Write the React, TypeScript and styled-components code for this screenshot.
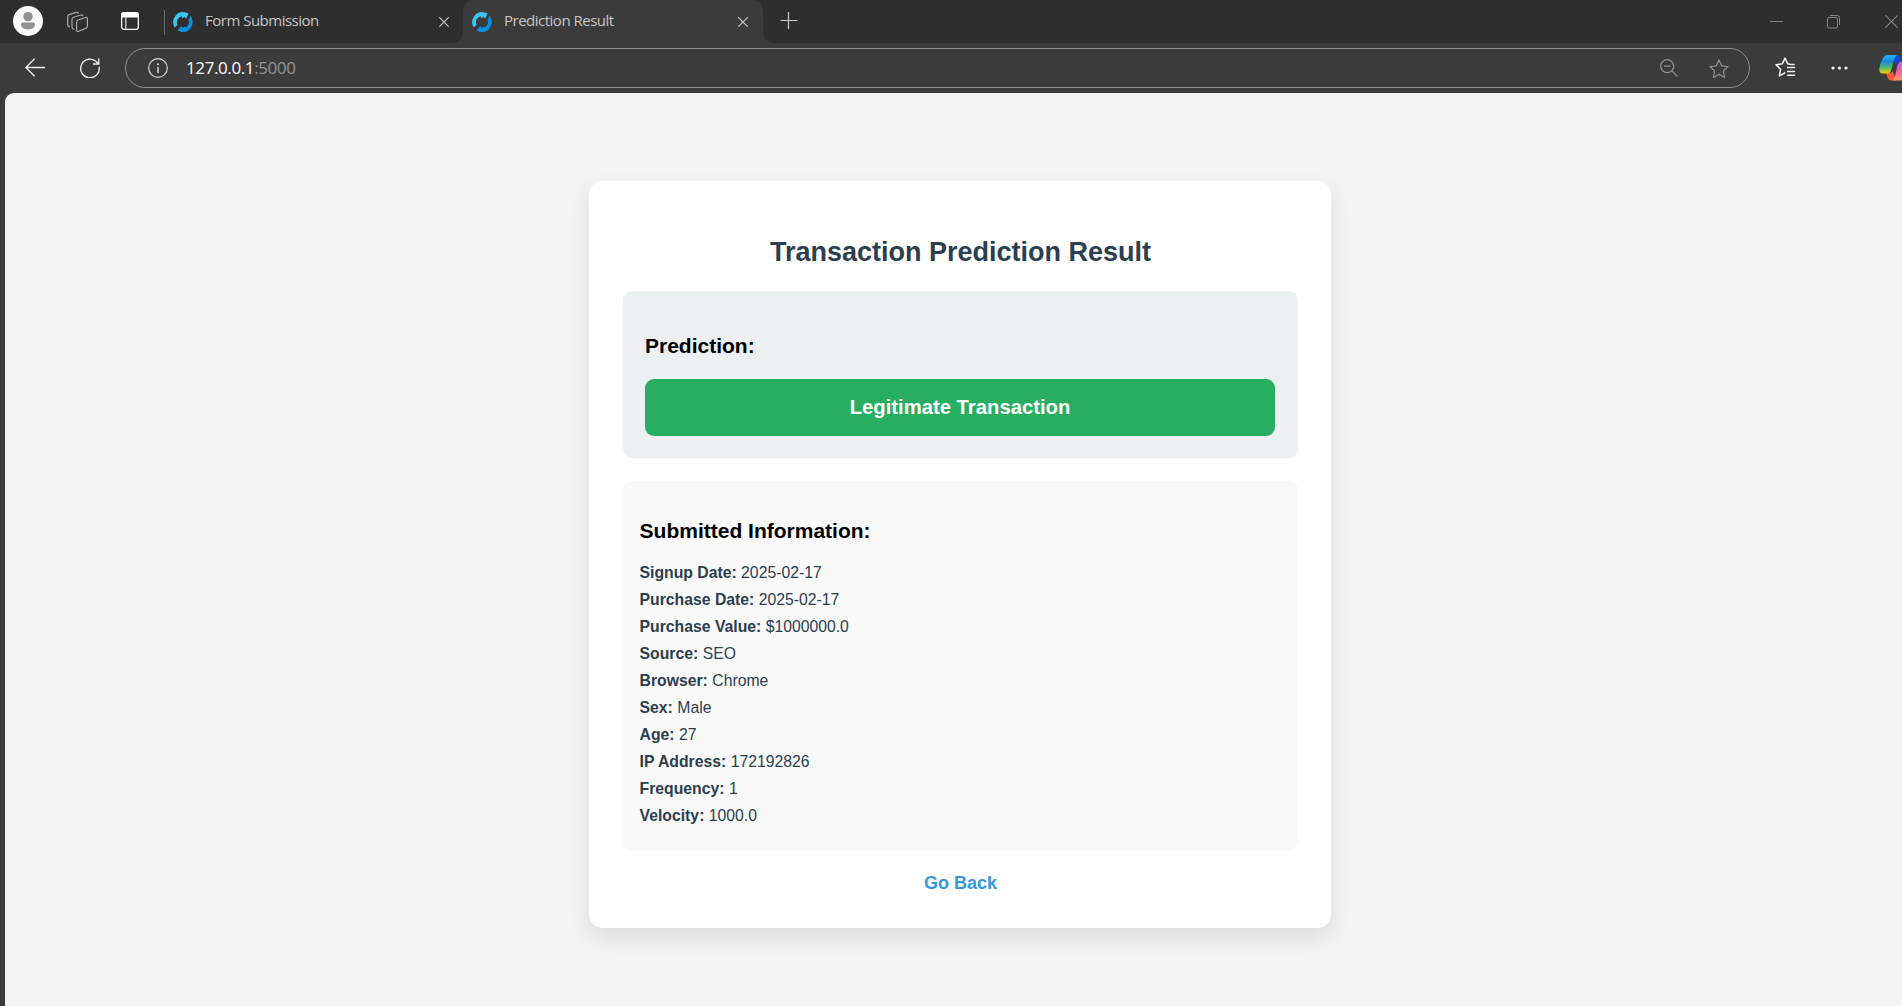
import React from "react";
import styled, { createGlobalStyle } from "styled-components";

const GlobalStyle = createGlobalStyle`
  * { box-sizing: border-box; }
  html, body { margin: 0; padding: 0; overflow: hidden; background: #3b3b3b; }
`;

const uiFont = `"Open Sans", "Noto Sans", sans-serif`;
const pageFont = `"Liberation Sans", Arial, sans-serif`;

const Window = styled.div`
  display: flex;
  flex-direction: column;
  width: 1902px;
  height: 1006px;
  overflow: hidden;
  background: #3b3b3b;
`;

const TabStrip = styled.div`
  display: flex;
  align-items: stretch;
  height: 43px;
  flex: none;
  background: #2e2e2e;
`;

const Slot = styled.div<{ $w: number; $ml?: number; $pt?: number }>`
  flex: none;
  width: ${(p) => p.$w}px;
  margin-left: ${(p) => p.$ml ?? 0}px;
  padding-top: ${(p) => p.$pt ?? 0}px;
  svg { display: block; }
`;

const Divider = styled.div`
  width: 1px;
  height: 25px;
  margin: 10px 0 0 25px;
  background: #6a6a6a;
`;

const Tab = styled.div<{ $active?: boolean; $w: number }>`
  position: relative;
  display: flex;
  align-items: flex-start;
  width: ${(p) => p.$w}px;
  padding: 12px ${(p) => (p.$active ? 15 : 14)}px 0 ${(p) => (p.$active ? 9 : 8)}px;
  border-radius: 10px 10px 0 0;
  background: ${(p) => (p.$active ? "#3b3b3b" : "transparent")};
  svg { display: block; flex: none; }
`;

const Flare = styled.span<{ $side: "left" | "right" }>`
  position: absolute;
  bottom: 0;
  ${(p) => p.$side}: -10px;
  width: 10px;
  height: 10px;
  background: radial-gradient(
    circle at ${(p) => (p.$side === "left" ? "0 0" : "100% 0")},
    #2e2e2e 9.5px,
    #3b3b3b 10px
  );
`;

const TabTitle = styled.span`
  flex: 1;
  margin-left: 12px;
  margin-top: -2px;
  font: 400 15px/20px ${uiFont};
  letter-spacing: -0.5px;
  color: #c6c6c6;
  white-space: nowrap;
`;

const Controls = styled.div`
  display: flex;
  margin-left: auto;
  padding-right: 4px;
`;

const Toolbar = styled.div`
  display: flex;
  height: 50px;
  flex: none;
  padding-top: 5px;
`;

const AddressBar = styled.div`
  display: flex;
  flex: none;
  width: 1625px;
  height: 40px;
  margin-left: 25px;
  border: 1px solid #8e8e8e;
  border-radius: 20px;
`;

const Url = styled.span`
  flex: 1;
  margin: 6px 0 0 18px;
  font: 400 17px/25px ${uiFont};
  letter-spacing: -0.4px;
  color: #ffffff;
`;

const Port = styled.span`
  color: #939393;
`;

const Page = styled.main`
  flex: 1;
  margin-left: 5px;
  padding: 88px 0 0 584px;
  border-top-left-radius: 9px;
  background: #f4f4f4;
  font-family: ${pageFont};
`;

const Card = styled.section`
  width: 742px;
  height: 747px;
  padding: 34px 33px 0 34px;
  border-radius: 13.5px;
  background: #ffffff;
  box-shadow: 0 9px 22.5px rgba(0, 0, 0, 0.1);
`;

const Title = styled.h1`
  margin: 21px 0 23px;
  font-size: 27px;
  line-height: 32px;
  font-weight: 700;
  text-align: center;
  color: #2c3e50;
`;

const Panel = styled.div<{ $bg: string; $pad: string; $h: number }>`
  height: ${(p) => p.$h}px;
  padding: ${(p) => p.$pad};
  margin-bottom: 23px;
  border-radius: 9px;
  background: ${(p) => p.$bg};
`;

const Heading = styled.h3<{ $gap: number }>`
  margin: 21px 0 ${(p) => p.$gap}px;
  font-size: 21px;
  line-height: 24px;
  color: #000000;
`;

const Verdict = styled.div`
  height: 57px;
  padding-top: 16px;
  border-radius: 9px;
  background: #27ae60;
  color: #ffffff;
  font-size: 20.25px;
  line-height: 24px;
  font-weight: 700;
  text-align: center;
`;

const Field = styled.p`
  margin: 0;
  font-size: 15.75px;
  line-height: 27px;
  color: #2c3e50;
`;

const BackLink = styled.a`
  display: block;
  margin-top: -2px;
  font-size: 18px;
  line-height: 22px;
  font-weight: 700;
  text-align: center;
  color: #3498db;
  text-decoration: none;
`;

const Favicon = () => (
  <svg width="20" height="20" viewBox="0 0 20 20">
    <path d="M1.7 15.4A10 10 0 0 1 12.6.4L15.6 1.5 13 7 11.6 4.6 9.4 6.4 8.6 4.3A6 6 0 0 0 4.6 12.9Z" fill="#3cc4ee" />
    <path d="M17 3.2A10 10 0 0 1 8.6 19.9L4.4 18.6 8.4 14 9.6 16 11.6 14.6 12.2 15.6A6 6 0 0 0 15.4 7.4L16.6 6.6Z" fill="#0a90e0" />
  </svg>
);

const Close = ({ size = 10, color = "#c8c8c8" }: { size?: number; color?: string }) => (
  <svg width={size} height={size} viewBox="0 0 10 10" fill="none" stroke={color} strokeWidth={12 / size}>
    <path d="M.3.3 9.7 9.7M9.7.3.3 9.7" />
  </svg>
);

const Avatar = () => (
  <svg width="30" height="30" viewBox="0 0 30 30">
    <circle cx="15" cy="15" r="15" fill="#f8f8f8" />
    <circle cx="15" cy="10.6" r="4.7" fill="#919191" />
    <path d="M9.5 16.5h11q1.6 0 1.6 1.6c0 3.6-3 5.4-7.1 5.4s-7.1-1.8-7.1-5.4q0-1.6 1.6-1.6Z" fill="#919191" />
  </svg>
);

const Workspaces = () => (
  <svg width="22" height="22" viewBox="0 0 22 22" fill="none" stroke="#a9a9a9" strokeWidth="1.2" strokeLinejoin="round" strokeLinecap="round">
    <path d="M11 9 18.6 6.5Q20.4 6 20.4 7.8V15Q20.4 16.5 19.1 17.1L11.7 20.3Q9.6 21.1 9.6 19V11Q9.6 9.4 11 9Z" />
    <path d="M15.9 4.8Q15.5 3.5 13.8 4L6.6 6.3Q5 6.8 5 8.5V16Q5 18 6.8 18.2" />
    <path d="M11.3 2.2Q10.9.9 9.2 1.4L2.1 3.6Q.7 4.1.7 5.7V13.4Q.7 15.5 2.4 15.7" />
  </svg>
);

const TabActions = () => (
  <svg width="18" height="18" viewBox="0 0 18 18">
    <rect x=".65" y=".65" width="16.7" height="16.7" rx="2.4" fill="none" stroke="#f4f4f4" strokeWidth="1.3" />
    <path d="M0 5.5V3Q0 0 3 0H15Q18 0 18 3V5.5Z" fill="#fff" />
    <path d="M4.8 5V17" stroke="#e4e4e4" strokeWidth="1.2" />
  </svg>
);

const starPath = "M10 1 12.7 6.8 19 7.6 14.4 12 15.6 18.5 10 15.4 4.4 18.5 5.6 12 1 7.6 7.3 6.8Z";

const Copilot = () => (
  <svg width="30" height="28" viewBox="0 0 30 28">
    <defs>
      <linearGradient id="cpA" x1="0" y1="0" x2="0" y2="1">
        <stop offset="0" stopColor="#18b9f5" />
        <stop offset=".35" stopColor="#1e88e0" />
        <stop offset=".65" stopColor="#46b878" />
        <stop offset="1" stopColor="#f5d000" />
      </linearGradient>
      <linearGradient id="cpB" x1="0" y1="0" x2="0" y2="1">
        <stop offset="0" stopColor="#b466f0" />
        <stop offset=".5" stopColor="#ee5fa0" />
        <stop offset="1" stopColor="#ff9a62" />
      </linearGradient>
    </defs>
    <path d="M14 0H18.5Q20.5 0 21.3 3L22.5 7H20Q17.5 7 16 10Z" fill="#1547d8" />
    <path d="M7 18H11Q12.5 18 14 16L17 25.5H12.5Q9.5 25.5 8.5 22Z" fill="#f4573c" />
    <path d="M9 0H18Q16 1 15 5L12.3 14.5Q11.3 18.5 8.5 18.5H4Q0 18.5.3 14Q1 8.5 3.5 4Q5.5 0 9 0Z" fill="url(#cpA)" />
    <path d="M22 25.5H13.4Q15.2 24.5 16.2 20.5L18 12Q19 7 22 7H26Q30 7 29.7 11.5Q29 17.5 27 22Q25.5 25.5 22 25.5Z" fill="url(#cpB)" />
  </svg>
);

const fields: [string, string][] = [
  ["Signup Date:", "2025-02-17"],
  ["Purchase Date:", "2025-02-17"],
  ["Purchase Value:", "$1000000.0"],
  ["Source:", "SEO"],
  ["Browser:", "Chrome"],
  ["Sex:", "Male"],
  ["Age:", "27"],
  ["IP Address:", "172192826"],
  ["Frequency:", "1"],
  ["Velocity:", "1000.0"],
];

export default function App() {
  return (
    <Window>
      <GlobalStyle />
      <TabStrip>
        <Slot $w={30} $ml={13} $pt={6}><Avatar /></Slot>
        <Slot $w={22} $ml={24} $pt={11}><Workspaces /></Slot>
        <Slot $w={18} $ml={32} $pt={12}><TabActions /></Slot>
        <Divider />
        <Tab $w={298}>
          <Favicon />
          <TabTitle>Form Submission</TabTitle>
          <Slot $w={10} $pt={5}><Close /></Slot>
        </Tab>
        <Tab $w={300} $active>
          <Flare $side="left" />
          <Favicon />
          <TabTitle>Prediction Result</TabTitle>
          <Slot $w={10} $pt={5}><Close /></Slot>
          <Flare $side="right" />
        </Tab>
        <Slot $w={18} $ml={17} $pt={12}>
          <svg width="18" height="18" stroke="#cccccc" strokeWidth="1.2"><path d="M.5 8.5H17.5M8.5 0V17" /></svg>
        </Slot>
        <Controls>
          <Slot $w={13} $pt={21}>
            <svg width="13" height="1"><rect width="13" height="1" fill="#858585" /></svg>
          </Slot>
          <Slot $w={14} $ml={44} $pt={15}>
            <svg width="14" height="14" fill="none" stroke="#858585">
              <rect x=".5" y="2.5" width="10" height="10.5" rx="1.5" />
              <path d="M3 .5H10.5Q12.5.5 12.5 2.5V10" />
            </svg>
          </Slot>
          <Slot $w={13} $ml={44} $pt={15}><Close size={13} color="#858585" /></Slot>
        </Controls>
      </TabStrip>
      <Toolbar>
        <Slot $w={20} $ml={25} $pt={10}>
          <svg width="20" height="19" fill="none" stroke="#f2f2f2" strokeWidth="1.3" strokeLinecap="round">
            <path d="M19.5 9.5H1M9.3 1 .8 9.5 9.3 18" />
          </svg>
        </Slot>
        <Slot $w={20} $ml={35} $pt={10}>
          <svg width="20" height="20" fill="none" stroke="#f2f2f2" strokeWidth="1.3" strokeLinecap="round">
            <path d="M19.2 9.2A9.3 9.3 0 1 1 16.5 3.8L18.6 6M18.8 1V6H13.5" />
          </svg>
        </Slot>
        <AddressBar>
          <Slot $w={20} $ml={22} $pt={9}>
            <svg width="20" height="20" fill="none" stroke="#d8d8d8" strokeWidth="1.2">
              <circle cx="10" cy="10" r="9.3" />
              <path d="M10 9V15" strokeWidth="1.5" />
              <circle cx="10" cy="6.2" r="1" fill="#d8d8d8" stroke="none" />
            </svg>
          </Slot>
          <Url>127.0.0.1<Port>:5000</Port></Url>
          <Slot $w={18} $pt={10}>
            <svg width="18" height="18" fill="none" stroke="#8e8e8e" strokeWidth="1.3">
              <circle cx="7.2" cy="7.2" r="6.5" />
              <path d="M4 7.2H10.4M12 12 17.4 17.4" />
            </svg>
          </Slot>
          <Slot $w={20} $ml={31} $pt={10}>
            <svg width="20" height="20" fill="none" stroke="#8e8e8e" strokeWidth="1.3" strokeLinejoin="round">
              <path d={starPath} />
            </svg>
          </Slot>
          <Slot $w={20} />
        </AddressBar>
        <Slot $w={20} $ml={25} $pt={9}>
          <svg width="21" height="20" fill="none" stroke="#f4f4f4" strokeWidth="1.5" strokeLinejoin="round" strokeLinecap="round">
            <path d="M14.5 7.2 12.7 6.8 10 1.2 7.3 6.8 1 7.8 5.6 12.2 4.4 18.8 9.8 15.8M12.6 10.5H19.5M12.6 14.5H19.5M12.6 18.2H19.5M14.5 7.2 19 7.6" />
          </svg>
        </Slot>
        <Slot $w={18} $ml={35} $pt={18}>
          <svg width="18" height="4" fill="#f4f4f4">
            <circle cx="3" cy="2" r="1.6" /><circle cx="9.5" cy="2" r="1.6" /><circle cx="16" cy="2" r="1.6" />
          </svg>
        </Slot>
        <Slot $w={30} $ml={31} $pt={7}><Copilot /></Slot>
      </Toolbar>
      <Page>
        <Card>
          <Title>Transaction Prediction Result</Title>
          <Panel $bg="#ecf0f1" $pad="22px 23px 22px 22px" $h={167}>
            <Heading $gap={21}>Prediction:</Heading>
            <Verdict>Legitimate Transaction</Verdict>
          </Panel>
          <Panel $bg="#f9f9f9" $pad="17px 17px 17px 16.6px" $h={370}>
            <Heading $gap={16}>Submitted Information:</Heading>
            {fields.map(([label, value]) => (
              <Field key={label}><strong>{label}</strong> {value}</Field>
            ))}
          </Panel>
          <BackLink href="#">Go Back</BackLink>
        </Card>
      </Page>
    </Window>
  );
}
